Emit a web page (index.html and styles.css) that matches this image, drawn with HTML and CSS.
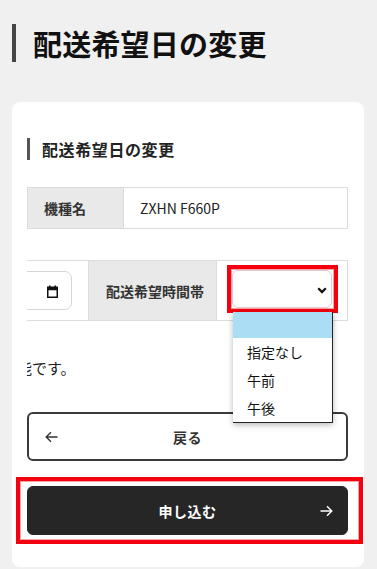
FILE: index.html
```html
<!DOCTYPE html>
<html lang="ja">
<head>
<meta charset="utf-8">
<title>配送希望日の変更</title>
<link rel="stylesheet" href="styles.css">
</head>
<body>
<header class="page-head">
  <span class="head-bar"></span>
  <h1 class="page-title">配送希望日の変更</h1>
</header>
<main class="card">
  <h2 class="sec-title"><span class="sec-bar"></span>配送希望日の変更</h2>
  <div class="spec">
    <div class="spec-label">機種名</div>
    <div class="spec-value">ZXHN F660P</div>
  </div>
  <div class="scroller">
    <div class="wide">
      <div class="date-row">
        <div class="date-cell">
          <div class="date-input">
            <span class="date-ph">年 / 月 / 日</span>
            <svg class="cal-icon" width="11" height="13" viewBox="0 0 11 13" aria-hidden="true">
              <rect x="0.75" y="2.25" width="9.5" height="10" fill="none" stroke="#111" stroke-width="1.5"/>
              <rect x="0.75" y="2.25" width="9.5" height="3" fill="#111"/>
              <rect x="2" y="0.5" width="1.6" height="2.5" fill="#111"/>
              <rect x="7.4" y="0.5" width="1.6" height="2.5" fill="#111"/>
            </svg>
          </div>
        </div>
        <div class="time-label">配送希望時間帯</div>
        <div class="select-cell">
          <div class="select">
            <svg class="chev" width="10" height="7" viewBox="0 0 10 7" aria-hidden="true">
              <path d="M1.2 1.3 L5 5.1 L8.8 1.3" fill="none" stroke="#111" stroke-width="2.2"/>
            </svg>
          </div>
          <span class="mark mark-sel"></span>
        </div>
      </div>
      <p class="note">※配送希望日は申込日の翌日以降から指定可能です。</p>
    </div>
  </div>
  <ul class="dropdown">
    <li class="opt opt-active"></li>
    <li class="opt">指定なし</li>
    <li class="opt">午前</li>
    <li class="opt">午後</li>
  </ul>
  <div class="actions">
    <button class="btn btn-back" type="button">
      <svg class="arrow" width="13" height="12" viewBox="0 0 13 12" aria-hidden="true">
        <path d="M12.5 6 H1.2 M6 1.2 L1.2 6 L6 10.8" fill="none" stroke="#333" stroke-width="1.4"/>
      </svg>
      <span class="btn-text">戻る</span>
      <span></span>
    </button>
    <div class="submit-wrap">
      <button class="btn btn-submit" type="button">
        <span></span>
        <span class="btn-text">申し込む</span>
        <svg class="arrow arrow-r" width="13" height="12" viewBox="0 0 13 12" aria-hidden="true">
          <path d="M0.5 6 H11.8 M7 1.2 L11.8 6 L7 10.8" fill="none" stroke="#fff" stroke-width="1.4"/>
        </svg>
      </button>
      <span class="mark mark-btn"></span>
    </div>
  </div>
</main>
</body>
</html>
```

FILE: styles.css
```css
* { box-sizing: border-box; }
html, body { margin: 0; padding: 0; }
body {
  background: #f0f0f0;
  font-family: "Noto Sans CJK JP", "Noto Sans", sans-serif;
  color: #222;
  width: 377px;
  height: 569px;
  overflow: hidden;
}
.page-head {
  display: flex;
  align-items: center;
  gap: 17px;
  margin: 24px 12px 0;
  height: 38px;
}
.head-bar {
  width: 4px;
  height: 38px;
  background: #454545;
  flex: none;
}
.page-title {
  margin: 0;
  font-size: 29px;
  line-height: 38px;
  font-weight: 700;
  color: #111;
  letter-spacing: 0.2px;
}
.card {
  position: relative;
  margin: 40px 13px 0 12px;
  background: #fff;
  border-radius: 8px;
  padding: 36px 16px 32px 15px;
}
.sec-title {
  display: flex;
  align-items: center;
  gap: 12px;
  margin: 0;
  font-size: 16px;
  line-height: 22px;
  font-weight: 700;
  color: #222;
  letter-spacing: 0.6px;
}
.sec-bar {
  width: 3px;
  height: 22px;
  background: #555;
  flex: none;
}
.spec {
  display: flex;
  margin-top: 27px;
  border: 1px solid #dcdcdc;
  height: 42px;
}
.spec-label {
  width: 96px;
  background: #e9e9e9;
  border-right: 1px solid #dcdcdc;
  font-size: 14px;
  font-weight: 700;
  color: #333;
  padding-left: 16px;
  display: flex;
  align-items: center;
}
.spec-value {
  flex: 1;
  font-size: 14px;
  color: #222;
  padding-left: 16px;
  display: flex;
  align-items: center;
}
.scroller {
  margin-top: 31px;
  display: flex;
  justify-content: flex-end;
  overflow: hidden;
}
.wide {
  flex: none;
  width: 631px;
}
.date-row {
  display: flex;
  height: 61px;
  border-top: 1px solid #dcdcdc;
  border-bottom: 1px solid #dcdcdc;
  border-right: 1px solid #dcdcdc;
}
.date-cell {
  flex: 1;
  padding: 10px 16px 9px 16px;
  border-right: 1px solid #dcdcdc;
}
.date-input {
  height: 39px;
  border: 1px solid #d6d6d6;
  border-radius: 7px;
  display: flex;
  align-items: center;
  justify-content: space-between;
  padding: 0 13px 0 14px;
  font-size: 14px;
  color: #222;
}
.cal-icon { display: block; margin-top: 1px; }
.time-label {
  width: 128px;
  background: #e9e9e9;
  border-right: 1px solid #dcdcdc;
  font-size: 14px;
  font-weight: 700;
  color: #333;
  display: flex;
  align-items: center;
  padding-left: 17px;
}
.select-cell {
  position: relative;
  width: 130px;
  padding: 9px 15px 0 15px;
}
.select {
  height: 38px;
  border: 1px solid #e8c9cc;
  border-radius: 6px;
  background: #fff;
  display: flex;
  align-items: center;
  justify-content: flex-end;
  padding-right: 4px;
}
.chev { display: block; margin-top: 2px; }
.note {
  margin: 35px 0 0;
  font-size: 15px;
  line-height: 24px;
  white-space: nowrap;
  color: #222;
}
.dropdown {
  position: absolute;
  left: 221px;
  top: 210px;
  width: 100px;
  margin: 0;
  padding: 0;
  list-style: none;
  background: #fff;
  border-right: 1px solid #222;
  border-bottom: 1px solid #222;
  box-shadow: 0 2px 6px rgba(0,0,0,0.28);
}
.opt {
  height: 28px;
  font-size: 14px;
  line-height: 28px;
  padding-left: 14px;
  color: #111;
}
.opt-active {
  height: 26px;
  background: #abdef4;
}
.actions {
  margin-top: 32px;
  display: flex;
  flex-direction: column;
  gap: 25px;
}
.btn {
  display: grid;
  grid-template-columns: 1fr auto 1fr;
  align-items: center;
  width: 100%;
  font-family: inherit;
  font-size: 14px;
  font-weight: 700;
  border-radius: 6px;
  cursor: pointer;
  margin: 0;
}
.btn-back {
  height: 49px;
  background: #fff;
  border: 2px solid #3a3a3a;
  color: #333;
  padding: 0 16px;
}
.btn-text { letter-spacing: 0.5px; }
.arrow { display: block; }
.arrow-r { justify-self: end; }
.submit-wrap { position: relative; }
.btn-submit {
  height: 49px;
  background: #262626;
  border: 1px solid #262626;
  color: #fff;
  padding: 0 14px;
}
.mark {
  position: absolute;
  border: 4px solid #f5000f;
  box-shadow: inset 0 0 0 1px #f7a3aa;
  pointer-events: none;
}
.mark-sel {
  left: 10px;
  right: 9px;
  top: 4px;
  bottom: 7px;
}
.mark-btn {
  left: -11px;
  right: -15px;
  top: -9px;
  bottom: -9px;
}
```
